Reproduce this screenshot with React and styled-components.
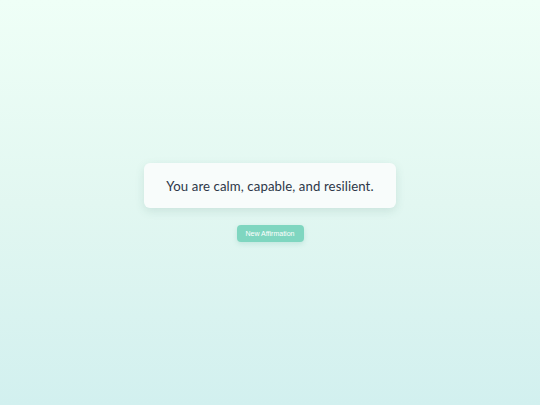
import styled, { createGlobalStyle } from "styled-components";
import { useState } from "react";

const affirmations = [
  "You are calm, capable, and resilient.",
  "You are worthy of good things.",
  "You grow stronger every day.",
];

const GlobalStyle = createGlobalStyle`
  html, body {
    margin: 0;
    height: 100%;
  }
  body {
    font-family: "Lato", "Noto Sans", sans-serif;
  }
  #root {
    height: 100%;
  }
`;

const App = () => {
  const [index, setIndex] = useState(0);

  const handleClick = () => {
    setIndex((prev) => (prev + 1) % affirmations.length);
  };

  return (
    <>
      <GlobalStyle />
      <Page>
        <Card>
          <Quote>{affirmations[index]}</Quote>
        </Card>
        <Button onClick={handleClick}>New Affirmation</Button>
      </Page>
    </>
  );
};

export default App;

const Page = styled.main`
  min-height: 100vh;
  box-sizing: border-box;
  display: flex;
  flex-direction: column;
  align-items: center;
  justify-content: center;
  gap: 17px;
  background: linear-gradient(180deg, #effff7 0%, #e2f7f1 50%, #d2f0ef 100%);
`;

const Card = styled.div`
  width: 252px;
  height: 45px;
  box-sizing: border-box;
  display: flex;
  align-items: center;
  justify-content: center;
  background: #f8fcfb;
  border-radius: 6px;
  box-shadow: 0 3px 10px rgba(60, 110, 100, 0.14);
`;

const Quote = styled.p`
  margin: 0;
  font-family: "Lato", "Noto Sans", sans-serif;
  font-size: 13.2px;
  font-weight: 400;
  color: #2d3748;
  letter-spacing: 0.1px;
`;

const Button = styled.button`
  width: 67px;
  height: 17px;
  padding: 0;
  border: none;
  border-radius: 4px;
  background: #7fd6c0;
  color: #ffffff;
  font-family: "Liberation Sans", Arial, sans-serif;
  font-size: 7px;
  box-shadow: 0 2px 5px rgba(80, 170, 150, 0.2);
  cursor: pointer;
`;
